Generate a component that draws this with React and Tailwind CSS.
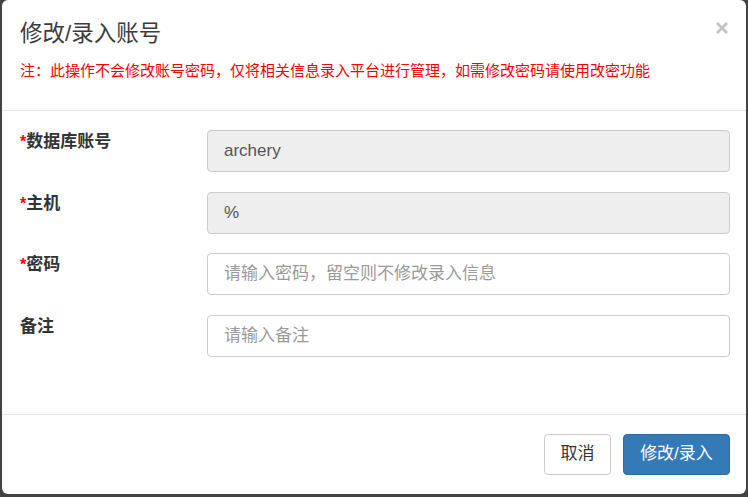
import React from 'react';

const fields = [
  { label: '数据库账号', required: true, value: 'archery', disabled: true },
  { label: '主机', required: true, value: '%', disabled: true },
  { label: '密码', required: true, placeholder: '请输入密码，留空则不修改录入信息' },
  { label: '备注', required: false, placeholder: '请输入备注' },
];

const App = () => {
  return (
    <div
      className="w-[748px] h-[497px] bg-[#434343] pl-[2px] pr-[2px] pb-[3px] overflow-hidden"
      style={{ fontFamily: '"Liberation Sans", "Noto Sans CJK SC", sans-serif' }}
    >
      <div className="relative h-[494px] bg-white rounded-[6px] flex flex-col text-[#333]">
        {/* header */}
        <div className="pl-[18px] pr-[16px] pt-[22px] pb-[29px] border-b border-[#e5e5e5]">
          <h4 className="text-[22.5px] leading-[24px] text-[#3c3c3c]">修改/录入账号</h4>
          <p className="mt-[15px] text-[15px] leading-[20px] text-[#ff0000]">
            注：此操作不会修改账号密码，仅将相关信息录入平台进行管理，如需修改密码请使用改密功能
          </p>
          <button className="absolute right-[18px] top-[22px] w-[12px] h-[12px]">
            <svg width="12" height="12" viewBox="0 0 12 12">
              <path d="M1 1L11 11M11 1L1 11" stroke="#c2c2c2" strokeWidth="2.6" strokeLinecap="butt" />
            </svg>
          </button>
        </div>

        {/* body */}
        <div className="pl-[18px] pr-[16px] pt-[19px] pb-[57px] flex flex-col gap-[19.5px] border-b border-[#e5e5e5]">
          {fields.map(f => (
            <div key={f.label} className="flex items-start">
              <label className="w-[187px] text-[17px] leading-[24px] font-bold text-[#333]">
                {f.required && <span className="text-[#ff0000] text-[16px]">*</span>}
                {f.label}
              </label>
              <input
                className={`flex-1 h-[42px] px-[16px] text-[17px] rounded-[4px] border border-[#cccccc] outline-none placeholder:text-[#9a9a9a] ${f.disabled ? 'bg-[#eeeeee] text-[#555]' : 'bg-white text-[#555]'}`}
                defaultValue={f.value}
                placeholder={f.placeholder}
                readOnly={f.disabled}
                style={{ fontFamily: 'inherit' }}
              />
            </div>
          ))}
        </div>

        {/* footer */}
        <div className="flex justify-end gap-[12px] pt-[19px] pr-[16px]">
          <button className="w-[67px] h-[41px] rounded-[4px] border border-[#cccccc] bg-white text-[17px] text-[#333]">
            取消
          </button>
          <button className="w-[107px] h-[41px] rounded-[4px] border border-[#2e6da4] bg-[#337ab7] text-[17px] text-white">
            修改/录入
          </button>
        </div>
      </div>
    </div>
  );
};

export default App;
